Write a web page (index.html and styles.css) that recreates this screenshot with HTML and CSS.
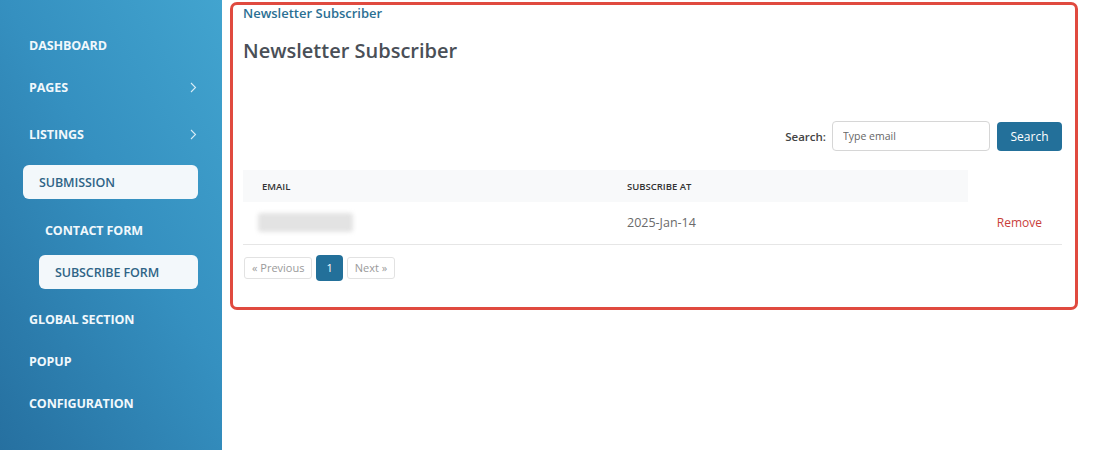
FILE: index.html
```html
<!DOCTYPE html>
<html lang="en">
<head>
    <meta charset="UTF-8">
    <meta name="viewport" content="width=device-width, initial-scale=1.0">
    <title>Newsletter Subscriber</title>
    <link rel="stylesheet" href="styles.css">
</head>
<body>
    <div class="layout">
        <aside class="sidebar">
            <ul class="nav">
                <li><a class="nav-link" href="#">DASHBOARD</a></li>
                <li class="has-sub"><a class="nav-link" href="#">PAGES
                    <svg class="chev" width="7" height="11" viewBox="0 0 7 11"><path d="M1 1l4.5 4.5L1 10" fill="none" stroke="currentColor" stroke-width="1.1"/></svg></a></li>
                <li class="has-sub"><a class="nav-link" href="#">LISTINGS
                    <svg class="chev" width="7" height="11" viewBox="0 0 7 11"><path d="M1 1l4.5 4.5L1 10" fill="none" stroke="currentColor" stroke-width="1.1"/></svg></a></li>
                <li class="has-sub open">
                    <a class="nav-link active" href="#">SUBMISSION</a>
                    <ul class="submenu">
                        <li><a class="nav-link" href="#">CONTACT FORM</a></li>
                        <li><a class="nav-link active" href="#">SUBSCRIBE FORM</a></li>
                    </ul>
                </li>
                <li><a class="nav-link" href="#">GLOBAL SECTION</a></li>
                <li><a class="nav-link" href="#">POPUP</a></li>
                <li><a class="nav-link" href="#">CONFIGURATION</a></li>
            </ul>
        </aside>
        <main class="main">
            <div class="panel">
                <div class="breadcrumb">Newsletter Subscriber</div>
                <h1 class="title">Newsletter Subscriber</h1>
                <form class="search-row" onsubmit="return false">
                    <label for="q">Search:</label>
                    <input id="q" type="text" placeholder="Type email">
                    <button type="submit">Search</button>
                </form>
                <table class="list">
                    <thead>
                        <tr>
                            <th class="col-email">EMAIL</th>
                            <th class="col-date">SUBSCRIBE AT</th>
                            <th class="col-act"></th>
                        </tr>
                    </thead>
                    <tbody>
                        <tr>
                            <td><span class="blurred"></span></td>
                            <td class="date">2025-Jan-14</td>
                            <td class="act"><a href="#">Remove</a></td>
                        </tr>
                    </tbody>
                </table>
                <div class="pager">
                    <span class="pg disabled">&laquo; Previous</span>
                    <span class="pg current">1</span>
                    <span class="pg disabled">Next &raquo;</span>
                </div>
            </div>
        </main>
    </div>
</body>
</html>
```

FILE: styles.css
```css
*{box-sizing:border-box;font-family:'Open Sans', 'Liberation Sans', sans-serif;}
body{margin:0;background:#fff;}
a{text-decoration:none;}
ul{margin:0;padding:0;list-style:none;}

.layout{display:flex;height:450px;}

/* sidebar */
.sidebar{flex:0 0 222px;background:linear-gradient(60deg, #2670a0 0%, #3590c0 55%, #42a4cf 100%);padding-top:24px;}
.nav, .nav li, .submenu{display:flex;flex-direction:column;}
.nav-link{display:flex;align-items:center;justify-content:space-between;height:42px;padding:0 25px 0 29px;color:#f1f8fc;font-size:12.5px;font-weight:700;letter-spacing:-0.1px;}
.chev{color:#d8ecf6;}
.has-sub{margin-bottom:5px;}
.nav-link.active{height:34px;margin:5px 24px 4px 23px;padding:0 16px;background:#f3f8fb;border-radius:6px;color:#2f6486;font-weight:600;}
.submenu{margin-top:6px;}
.submenu .nav-link{padding-left:45px;}
.submenu .nav-link.active{margin:4px 24px 4px 39px;padding-left:16px;}

/* main */
.main{flex:1;padding:2px 19px 0 8px;}
.panel{height:308px;border:3px solid #e04a3f;border-radius:7px;padding:0 13px 0 10px;}
.breadcrumb{height:16px;line-height:16px;color:#2b6f93;font-size:13px;font-weight:600;}
.title{margin:17px 0 0;line-height:26px;font-size:20px;font-weight:600;color:#4a4f57;}

.search-row{display:flex;justify-content:flex-end;align-items:center;margin-top:57px;height:30px;}
.search-row label{font-size:11.5px;font-weight:600;color:#444;margin-right:6px;}
.search-row input{width:158px;height:30px;padding:0 10px;border:1px solid #d6d6d6;border-radius:4px;font-size:10.5px;color:#555;outline:none;}
.search-row input::placeholder{color:#666;}
.search-row button{width:65px;height:29px;margin-left:7px;border:0;border-radius:4px;background:#23709a;color:#fff;font-size:12px;font-weight:500;cursor:pointer;}

.list{width:100%;margin-top:19px;border-collapse:collapse;}
.list th{height:32px;padding:0 19px;background:#f8f9fa;text-align:left;font-size:9.5px;font-weight:600;color:#333;}
.list th.col-email{width:365px;}
.list th.col-act{background:#fff;width:94px;}
.list td{height:42px;padding:0 19px;border-bottom:1px solid #e6e6e6;font-size:12.5px;color:#6a6a6a;}
.blurred{display:block;width:95px;height:19px;margin-left:-4px;background:#e3e3e3;border-radius:3px;filter:blur(2px);}
.list td.act{text-align:right;padding-right:20px;}
.act a{color:#c9403a;font-size:12px;}

.pager{display:flex;align-items:center;gap:4px;margin-top:10px;padding-left:1px;}
.pg{display:inline-flex;align-items:center;height:22px;padding:0 7px;border:1px solid #e2e2e2;border-radius:3px;font-size:11px;color:#9a9a9a;}
.pg.current{height:26px;padding:0 10px;border:0;border-radius:4px;background:#23709a;color:#fff;}
```
